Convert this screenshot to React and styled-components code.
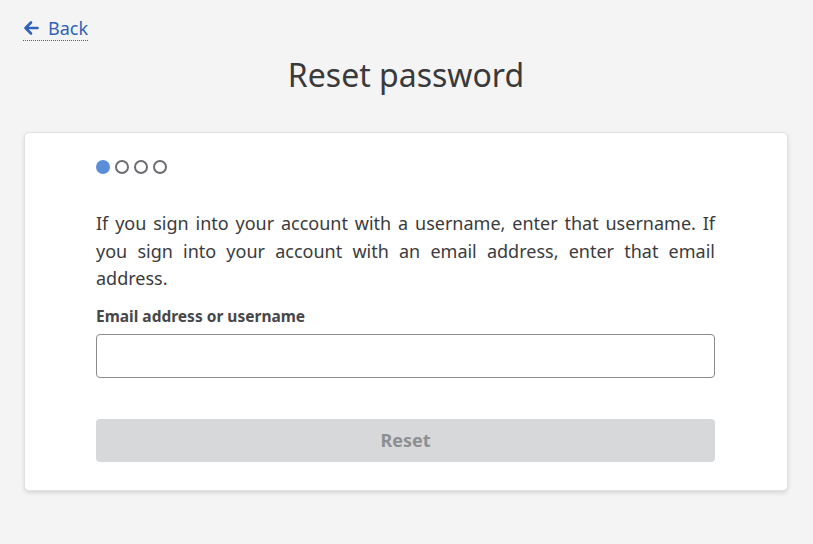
import React from 'react'
import styled, { createGlobalStyle } from 'styled-components'

const GlobalStyle = createGlobalStyle`
  body {
    margin: 0;
    background: #f4f4f4;
    font-family: "Noto Sans", "Open Sans", sans-serif;
    color: #3b3b3d;
  }
`

const Page = styled.div`
  padding: 16px 25px 40px 24px;
`

const BackLink = styled.a`
  display: inline-flex;
  align-items: center;
  gap: 9px;
  color: #2f62b8;
  font-size: 18px;
  line-height: 24px;
  text-decoration: none;
  border-bottom: 1.5px dotted #2f62b8;
  margin-left: -1px;
`

const Title = styled.h1`
  margin: 12px 0 0;
  text-align: center;
  font-size: 32px;
  font-weight: 400;
  line-height: 44px;
  color: #3a3a3c;
`

const Card = styled.div`
  margin-top: 35px;
  background: #fff;
  border: 1px solid #e2e2e2;
  border-radius: 5px;
  box-shadow: 0 2px 4px rgba(0, 0, 0, 0.12);
  padding: 27px 72px 28px 71px;
`

const Steps = styled.div`
  display: flex;
  gap: 5px;
`

const Step = styled.span`
  width: 14px;
  height: 14px;
  border-radius: 50%;
  box-sizing: border-box;
  background: ${p => (p.$active ? '#5b8ed9' : 'transparent')};
  border: ${p => (p.$active ? 'none' : '2px solid #6c6d72')};
`

const Intro = styled.p`
  margin: 36px 0 0;
  font-size: 18px;
  line-height: 27.5px;
  text-align: justify;
  color: #3b3b3d;
`

const Label = styled.label`
  display: block;
  margin-top: 13px;
  font-size: 15.5px;
  font-weight: 700;
  line-height: 20px;
  color: #47474a;
`

const Input = styled.input`
  display: block;
  box-sizing: border-box;
  width: 100%;
  height: 44px;
  margin-top: 8px;
  border: 1px solid #8b8b90;
  border-radius: 4px;
  padding: 0 12px;
  font-family: inherit;
  font-size: 18px;
  outline: none;
`

const Button = styled.button`
  display: block;
  width: 100%;
  height: 43px;
  margin-top: 41px;
  border: none;
  border-radius: 4px;
  background: #d7d8da;
  color: #8e8f93;
  font-family: inherit;
  font-size: 18px;
  font-weight: 700;
`

export default function App() {
  return (
    <>
      <GlobalStyle />
      <Page>
        <BackLink href="#">
          <svg width="16" height="16" viewBox="0 0 16 16" fill="none">
            <path d="M14.5 8H2.5M8 2.5L2.5 8L8 13.5" stroke="#2f62b8" strokeWidth="2.6" strokeLinecap="round" strokeLinejoin="round" />
          </svg>
          Back
        </BackLink>
        <Title>Reset password</Title>
        <Card>
          <Steps>
            <Step $active />
            <Step />
            <Step />
            <Step />
          </Steps>
          <Intro>
            If you sign into your account with a username, enter that username. If you sign into your account with an email address, enter that email address.
          </Intro>
          <Label htmlFor="user">Email address or username</Label>
          <Input id="user" type="text" />
          <Button disabled>Reset</Button>
        </Card>
      </Page>
    </>
  )
}
